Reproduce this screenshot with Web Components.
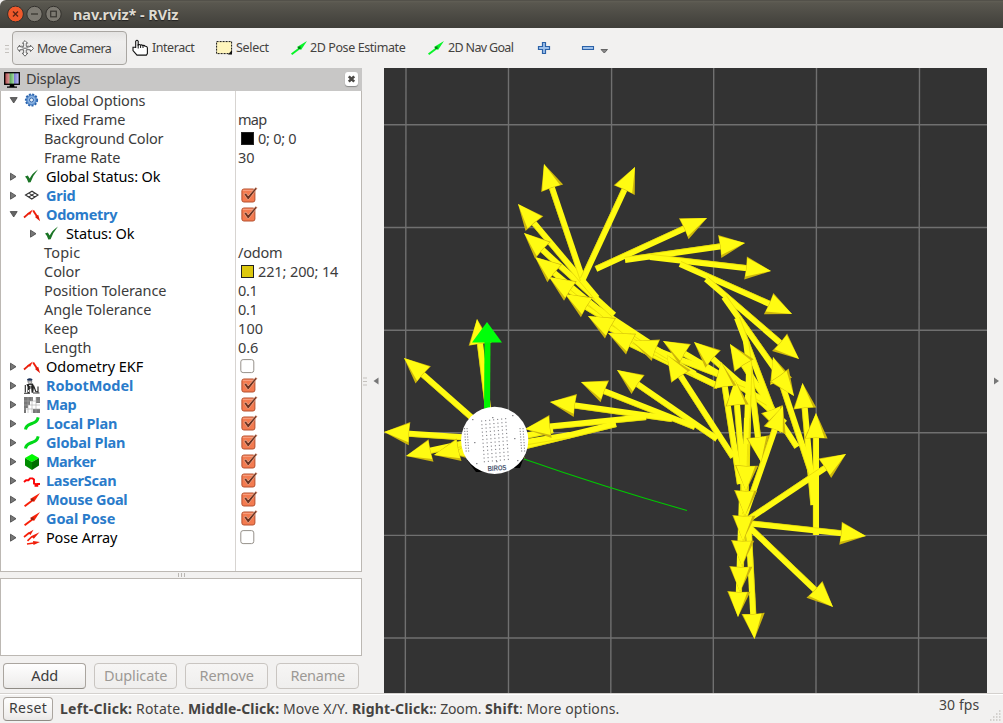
<!DOCTYPE html>
<html lang="en"><head><meta charset="utf-8"><title>nav.rviz* - RViz</title>
<style>
html,body{margin:0;height:100%;overflow:hidden;background:#f2f1f0}
body{font-family:"Noto Sans","Open Sans",sans-serif;font-size:14.5px;color:#3c3c3c}
</style></head><body>
<rviz-window></rviz-window>
<script>
const define=(name,html,setup)=>customElements.define(name,class extends HTMLElement{
  connectedCallback(){
    if(this.shadowRoot)return;
    const r=this.attachShadow({mode:'open'});
    r.innerHTML=typeof html==='function'?html(this):html;
    if(setup)setup(this,r);
  }
});

/* A single line of text tracked to a given width. */
define('fit-text','<style>:host{display:block;flex:none;white-space:nowrap;line-height:19px;width:var(--w)}span{display:inline-block}</style><span><slot></slot></span>',(el,r)=>{
  const w=+el.getAttribute('w');
  if(!w)return;
  el.style.setProperty('--w',w+'px');
  const s=r.querySelector('span'),n=el.textContent.length;
  s.style.letterSpacing=((w+.3-s.getBoundingClientRect().width)/n).toFixed(3)+'px';
});

const svg=(w,h,body,vb)=>`<svg width="${w}" height="${h}" viewBox="${vb||`0 0 ${w} ${h}`}">${body}</svg>`;
const arrowIcon=(c,d)=>svg(16,16,`<path d="M0 13.4 8 7.4 9.2 9 1.2 15z" fill="${c}"/><path d="M6 7 16 1 10 10z" fill="${c}"/><path d="m6.6 7 2.8-.8.4 2.6-2.2.4z" fill="${d}"/>`);
const odom='<path d="M0 10.5 4.8 6.4" stroke="#e8200c" stroke-width="1.8"/><path d="M3 6.4 8.8 2.6 6.2 7.8z" fill="#f01c08"/><path d="M9.2 3.4 13 9.5" stroke="#f01c08" stroke-width="1.9"/><path d="M11 9.9 14.2 7.8l1.9 6.4z" fill="#e01808"/>';
const plan=svg(16,16,'<path d="M1.5 13.5C2 9 5 8.7 8 7.5S13 6 14.2 1.3" fill="none" stroke="#00d818" stroke-width="3"/>');
const icons={
  gear:svg(16,16,'<circle cx="7.5" cy="7" r="5.6" fill="#6d9fd8" stroke="#2c64ad" stroke-width="2" stroke-dasharray="2 1.3"/><circle cx="7.5" cy="7" r="4.5" fill="#8db5e4" stroke="#4d82c4"/><circle cx="7.5" cy="7" r="2" fill="#e9f1fa" stroke="#3569ad"/>'),
  ok:svg(16,16,'<path d="M1 7.6 3.8 6.6 5.7 9.6Q8.4 4.2 14 .6 9 6.5 6.6 13.2L4.3 13.4Q3.4 10 1 7.6z" fill="#1b7526"/>'),
  grid:svg(16,16,'<path d="M1.5 7 8 3.2l6 3.8-6.2 4z M4.8 5.1l6.2 4M11 5.1l-6.4 4" fill="none" stroke="#333" stroke-width="1.1"/>'),
  odom:svg(16,16,odom),
  robot:svg(16,16,'<path d="M3 1.2Q5.8-.5 8.5 1.2L8 2.7H3.5z" fill="#1c3158"/><path d="M3.8 3h4l-.4 2.5H4.5z" fill="#ccc" stroke="#666" stroke-width=".6"/><path d="M2.4 6.2 9 5.5 10 9 9.2 14.8H7.6L7.2 10 5.6 11 5.6 15H3.4L3.6 9z" fill="#222"/><path d="M1.3 7v7.5M9.5 7.5l2.3 6 2.2.5V8.5" fill="none" stroke="#222" stroke-width="1.1"/><path d="M0 15.3h6M9 15h6.5" stroke="#333"/><path d="M5 7.4h2.5M5.8 9h1.5M4.5 12v2" stroke="#eee"/>'),
  map:svg(16,16,'<rect width="16" height="16" fill="#fff"/><path d="M0 0h9v4H6v4H4v3H0zM12 0h4v6h-4zM0 11h2v5H0zM9 12h7v4H9z" fill="#777"/><path d="M0 4h16M0 8h16M0 12h16M4 0v16M8 0v16M12 0v16" stroke="#aaa" stroke-width=".6"/>'),
  plan,
  marker:svg(16,16,'<path d="M8 0 15 4 8 8 1 4z" fill="#00fa00"/><path d="M1 4 8 8v8L1 11.5z" fill="#008c00"/><path d="M15 4 8 8v8l7-4.5z" fill="#006f00"/>'),
  laser:svg(16,16,'<path d="M0 9 2 7.2H4.5L6 5.4H8.5L10 6.4V10.5l1.5.6v1.6H13.3V11H16" fill="none" stroke="#fb0505" stroke-width="1.9"/>'),
  goal:arrowIcon('#f82008','#8e2414'),
  array:svg(16,16,'<path d="M0 7 5 3M3.5 10.8 8 6.5M3 14 10 13" stroke="#f82008" stroke-width="1.7"/><path d="M3.7 3 9.5-.3 6.5 4.9zM7 6.2 15.5 2.2 9.8 8.8zM9 10.9 16 12.1 9.5 15z" fill="#ee1d0a"/>')
};
const check=svg(18,17,'<rect x=".9" y="2" width="13" height="13" rx="2" fill="#f37b50" stroke="#b5502e"/><path d="M1.8 3.3h11" stroke="#f9a787"/><path d="M3 7.3 5 6 7.2 9 14.6.6 16.2 1.4 7.7 12.5H6.7z" fill="#6b3322" stroke="#ffc2a7" stroke-width=".6"/>');
const box=svg(18,17,'<rect x=".8" y="1.6" width="13" height="13" rx="2.3" fill="#fff" stroke="#96918a"/>');

define('tree-row',el=>{
  const a=n=>el.getAttribute(n);
  const tone=a('tone'),v=a('value')||'';
  return `<style>
  :host{display:grid;grid-template-columns:234px 1fr;height:19px;align-items:center;color:${tone==='on'?'#2a7bca':tone==='black'?'#000':'#3c3c3c'};font-weight:${tone==='on'?700:400}}
  .n,.v{display:flex;align-items:center;height:19px;min-width:0}
  .n{padding-left:${a('level')==='1'?27:7}px;box-sizing:border-box}
  .t{width:10px;height:12px;flex:none}.i{width:16px;height:16px;margin:0 6px;flex:none}
  .plain{padding-left:43px}.v{padding-left:3px;color:#3c3c3c;font-weight:400}.sw{width:11px;height:11px;border:1px solid #222;margin:0 4px 0 3px}
  .c{margin-left:3px}svg{display:block;overflow:visible}
  </style><div class="n ${a('icon')?'':'plain'}">${a('icon')?`<div class="t">${svg(10,12,a('open')!==null?'<path d="M2.2 2.6h7L5.7 8z" fill="#666" stroke="#444" stroke-width=".8"/>':'<path d="M2.5 2.2v7L8 5.7z" fill="#777" stroke="#444" stroke-width=".8"/>')}</div><div class="i">${icons[a('icon')]}</div>`:''}<fit-text w="${a('w')}">${a('label')}</fit-text></div>
  <div class="v">${v==='on'?`<span class="c">${check}</span>`:v==='off'?`<span class="c" style="margin-left:2px">${box}</span>`:`${a('swatch')?`<span class="sw" style="background:${a('swatch')}"></span>`:''}${v?`<fit-text w="${a('vw')}">${v}</fit-text>`:''}`}</div>`;
});

/* label, width, icon, tone, value, value width, swatch, flags */
const rows=[
 ['Global Options',99,'gear','','','','','open'],
 ['Fixed Frame',81,'','','map',28],
 ['Background Color',119,'','','0; 0; 0',38,'#000'],
 ['Frame Rate',76,'','','30',16],
 ['Global Status: Ok',114,'ok','black'],
 ['Grid',29,'grid','on','on'],
 ['Odometry',71,'odom','on','on','','','open'],
 ['Status: Ok',68,'ok','black','','','','nest'],
 ['Topic',36,'','','/odom',44],
 ['Color',36,'','','221; 200; 14',80,'#ddc80e'],
 ['Position Tolerance',122,'','','0.1',19],
 ['Angle Tolerance',107,'','','0.1',19],
 ['Keep',34,'','','100',25],
 ['Length',47,'','','0.6',20],
 ['Odometry EKF',97,'odom','black','off'],
 ['RobotModel',87,'robot','on','on'],
 ['Map',30,'map','on','on'],
 ['Local Plan',71,'plan','on','on'],
 ['Global Plan',79,'plan','on','on'],
 ['Marker',49,'marker','on','on'],
 ['LaserScan',70,'laser','on','on'],
 ['Mouse Goal',81,'goal','on','on'],
 ['Goal Pose',69,'goal','on','on'],
 ['Pose Array',71,'array','black','off']
];

define('push-button',el=>`<style>
 :host{display:flex;align-items:center;justify-content:center;box-sizing:border-box;border:1px solid #aaa59f;border-bottom-color:#8f8b85;border-radius:4px;background:linear-gradient(#fefefe,#f0efee 80%,#e9e8e7);color:#3c3c3c}
 :host([disabled]){border-color:#c9c5c1;background:linear-gradient(#f6f5f4,#efeeed);color:#9c9995}
 fit-text{margin-top:-2px}
 </style><fit-text w="${el.getAttribute('w')}">${el.getAttribute('label')}</fit-text>`);

define('title-bar',`<style>
 :host{display:flex;align-items:center;height:28px;background:linear-gradient(#45433e 0,#615f56 1px,#59574f 3px,#3f3e39);color:#dfdbd2;font-weight:700;font-size:14.5px;padding-left:7px;box-sizing:border-box;border-radius:6px 0 0 0}
 svg{display:block;margin-right:11px}fit-text{text-shadow:0 1px 1px #222}
 </style>${svg(55,18,'<circle cx="8.5" cy="9" r="7.9" fill="#f0592b" stroke="#33312d"/><path d="m6 6.5 5 5m0-5-5 5" stroke="#5b2414" stroke-width="1.4"/><circle cx="27.5" cy="9" r="7.7" fill="#7d7a72" stroke="#33312d"/><path d="M24 9h7" stroke="#383631" stroke-width="1.3"/><circle cx="46.5" cy="9" r="7.7" fill="#7d7a72" stroke="#33312d"/><rect x="43.7" y="6.2" width="5.6" height="5.6" fill="none" stroke="#383631" stroke-width="1.2"/>')}<fit-text w="105">nav.rviz* - RViz</fit-text>`);

define('tool-item',el=>`<style>:host{display:flex;align-items:center;height:34px;box-sizing:border-box}
 ::slotted(svg){display:block;flex:none}
 :host([active]){border:1px solid #a9a6a2;border-radius:4px;background:linear-gradient(#e4e3e2,#efeeed 30%,#e8e7e6)}</style><slot></slot>`);
define('tool-bar',`<style>
 :host{display:flex;height:40px;padding:3px 0 3px 5px;box-sizing:border-box;background:#f2f1f0;font-size:12.5px;color:#454341;align-items:flex-start}
 tool-item{height:33px}tool-item[active]{height:34px;width:115px;margin:0 5px 0 1px;padding:1px 0 0 4px}
 svg{display:block}.menu{margin:2px 0 0 4px}
 </style>
 ${svg(6,34,'<path d="M0 14.5h4M0 18h4M0 21.5h4" stroke="#c4c1bd"/>')}
 <tool-item active>${svg(17,17,'<path d="M8 .6 10.6 3.2H9.2v3.2q3-.4 4.3.2V5.2l3 3.2-3 3.2v-1.5q-1.5-.7-4.3-.3v3.4h1.6L8 16.2 5.2 13.2h1.5V9.8q-2.7-.3-4.1.3v1.5L.2 8.4 2.6 5.2v1.4q1.5-.6 4.1-.2V3.2H5.4z" fill="#fff" stroke="#555" stroke-width=".9"/><path d="M2.5 6.5 13.5 10M13.5 6.5 2.5 10" stroke="#777" stroke-width=".8"/>')}<fit-text style="margin-left:3px" w="74">Move Camera</fit-text></tool-item>
 <tool-item>${svg(17,17,'<path d="M3.7 9V2.2Q5 .3 6.2 2.2V6q1.2-1 2.3.1 1.3-.7 2.3.5 1.5-.6 2.3.7 2-.2 2.3 1.5v5.8l-1 1.5H5L1 11.5V8.3h2.7z" fill="#fff" stroke="#111" stroke-width="1.1"/><path d="M6.2 5v4.5M8.6 6.2V9M11 7v2" stroke="#111"/>')}<fit-text style="margin-left:3px" w="42">Interact</fit-text></tool-item>
 <tool-item style="margin-left:22px">${svg(17,14,'<rect x=".6" y=".6" width="15" height="12" fill="#fff5bd" stroke="#111" stroke-dasharray="2 1"/><path d="M16 9v4.5h-4z" fill="#111"/>')}<fit-text style="margin-left:3px" w="32.5">Select</fit-text></tool-item>
 <tool-item style="margin-left:22.5px">${arrowIcon('#08f428','#067a18')}<fit-text style="margin-left:3px" w="95">2D Pose Estimate</fit-text></tool-item>
 <tool-item style="margin-left:23px">${arrowIcon('#08f428','#067a18')}<fit-text style="margin-left:4px" w="65">2D Nav Goal</fit-text></tool-item>
 <tool-item style="margin-left:24px">${svg(14,14,'<path d="M5.5 1.5h3v4h4v3h-4v4h-3v-4h-4v-3h4z" fill="#9dc0ea" stroke="#2c62a8" stroke-width="1.2"/>')}</tool-item>
 <tool-item style="margin-left:30px">${svg(14,14,'<path d="M1.5 5.5h11v3h-11z" fill="#9dc0ea" stroke="#2c62a8" stroke-width="1.1"/>')}<svg class="menu" width="10" height="14" viewBox="0 0 10 14"><path d="M2 7.5h6.5L5.3 11z" fill="#888" stroke="#666"/></svg></tool-item>`);

define('displays-panel',()=>`<style>
 :host{display:flex;flex-direction:column;width:362px;height:625px;background:#f2f1f0}
 header{height:23px;background:#c8c7c6;display:flex;align-items:center;padding:0 4px;box-sizing:border-box;font-size:14.5px}
 header fit-text{margin:-2px 0 0 6px;flex:1}
 .close{width:13px;height:14px;background:#fff;border-radius:3px;box-shadow:0 1px 1px #888;margin-top:-1px}
 .tree{height:481px;box-sizing:border-box;border:1px solid #bcb8b3;border-top:0;background:linear-gradient(90deg,transparent 234px,#d7d4d1 234px 235px,transparent 235px) #fff}
 .grip{height:6px;display:flex;justify-content:center}
 .help{height:78px;box-sizing:border-box;border:1px solid #bcb8b3;background:#fff}
 .buttons{display:grid;grid-template-columns:repeat(4,83px);gap:8px;padding:7px 3px 0}
 push-button{height:26px}svg{display:block}
 </style><header>${svg(16,18,'<defs><linearGradient id="s"><stop offset="0" stop-color="#b04a4a"/><stop offset=".32" stop-color="#d99a9a"/><stop offset=".34" stop-color="#56a456"/><stop offset=".65" stop-color="#a9dda9"/><stop offset=".67" stop-color="#7c7cd0"/><stop offset="1" stop-color="#c8c8fa"/></linearGradient></defs><rect x=".7" y="1.7" width="14.6" height="11.6" fill="url(#s)" stroke="#000" stroke-width="1.3"/><path d="M6 13.5h4l.5 2H13v1.3H3v-1.3h2.5z"/>')}<fit-text w="54">Displays</fit-text><span class="close">${svg(13,14,'<path d="m3.8 4.3 5.4 5.4m0-5.4-5.4 5.4" stroke="#4c4a47" stroke-width="2.6"/>')}</span></header>
 <div class="tree">${rows.map(r=>`<tree-row label="${r[0]}" w="${r[1]}" icon="${r[2]||''}" tone="${r[3]||''}" value="${r[4]||''}" vw="${r[5]||''}" swatch="${r[6]||''}" ${r[7]==='open'?'open':r[7]==='nest'?'level="1"':''}></tree-row>`).join('')}</div>
 <div class="grip">${svg(9,6,'<path d="M1.5 1v4M4.5 1v4M7.5 1v4" stroke="#bab7b3"/>')}</div>
 <div class="help"></div>
 <div class="buttons"><push-button label="Add" w="26.5"></push-button><push-button disabled label="Duplicate" w="63"></push-button><push-button disabled label="Remove" w="54"></push-button><push-button disabled label="Rename" w="54"></push-button></div>`);

/* Odometry arrows, as tip x, tip y, tail x, tail y in window coordinates. */
const poses=[
 [816,413,816,535],[802.5,383,813.5,505],[773,357,812,475],[730,344,797,447],[694,342,785,423],[663,341,768,403],[632,341,746,385],[608,333,718,386],[588,316,695,374],[565,294,669,357],[549,277,651,344],[535,257,629,335],[524,233,614,315],[518,204,597,298],[544,164,583,280],[635,167,583,279],
 [707,218,596,269],[745,243,625,260],[771,271,650,257],[792,314,680,264],[799,359,706,279],[794,396,724,297],[781,433,737,318],[761,462,746,341],[746,491,749,369],[745,516,748,395],[743,541,747,418],[742,566,745,444],[740,592,744,470],[738,617,742,495],[754.5,639,748,517],[833,607,746,524],[866,536,746,523],[846,454,746,521],[783,406,745,515],[735,380,745,500],[721,362,740,484],
 [667,355,733,457],[617,370,717,439],[581,382,695,427],[550,402,672,419],[525,429,646,417],[497,453,616,424],[452,454,570,435],[434,455,553,430],[406,456,525,430],[384,432,505,440],[404,358,496,439],[477,319,492,440]
];
const place=([x,y,u,v],draw)=>{
  const L=Math.hypot(u-x,v-y),a=Math.atan2(v-y,u-x)*180/Math.PI;
  return `<g transform="translate(${x} ${y}) rotate(${a.toFixed(2)})">${draw(L.toFixed(1),a)}</g>`;
};
const shaft=p=>place(p,L=>`<path d="M22-3H${L}V3H22z" fill="#fffb12"/><path d="M22 2.7H${L}" stroke="#e5d808" stroke-width=".7"/>`);
/* the lit face of the cone leans to the upper right */
const head=p=>place(p,(L,a)=>{
  const up=Math.cos((a+40)*Math.PI/180)>0?1:-1;
  return `<path d="M0 0 25.6-11.6 25 0 25.6 11.6z" fill="#cdb70c"/><path d="M0 0 25 ${-9.4-up*.9} 24.6 0 25 ${9.4-up*.9}z" fill="#fffb12"/>`;
});
let dots='';
for(let j=0;j<12;j++)for(let i=0;i<7;i++)dots+=`<rect x="${(481+i*4+j*.25).toFixed(1)}" y="${(420.5+j*3.7-i*.4).toFixed(1)}" width="1.2" height="1.1"/>`;
for(let j=0;j<9;j++)for(const x of[464,466.5,519.5,522.5])dots+=`<rect x="${x+j*.2}" y="${428+j*2.8}" width="1.1" height="1.2"/>`;
for(const[x,y]of[[492,417],[512,415],[472,419],[474,442],[514,438],[476,463],[517,460],[496,461]])dots+=`<rect x="${x}" y="${y}" width="1.5" height="1.2"/>`;
define('scene-view',`<style>:host{display:block;width:603px;height:625px;background:#333}svg{display:block}</style>
<svg width="603" height="625" viewBox="384 68 603 625">
<g stroke-width="1.4" stroke="#707070"><path d="M406 68 405.3 693M508.5 68V693M611.6 68 610.8 693M713.7 68 713.3 693M816.5 68 816 693M919.5 68 918.5 693M384 124.8H987M384 227.5H987M384 330.3H987M384 432.8H987M384 535.4H987M384 638H987"/></g>
<path d="M524 459Q604 487 687 510.5" fill="none" stroke="#00c800" stroke-width="1.1"/>
${poses.map(shaft).join('')}${poses.map(head).join('')}
<path d="M484.5 342h6L490 412h-6z" fill="#00f400"/><path d="M487 322 502 342.5H472z" fill="#00ff0a"/>
<path d="m467 460 9 12h10v-12zM524 457l-4 11h-12l2-8z" fill="#000"/>
<circle cx="494.7" cy="440.3" r="33.6" fill="#fff"/><g fill="#8b8b90">${dots}</g>
<text x="487.5" y="470.7" transform="rotate(-3 496 468)" textLength="19" lengthAdjust="spacingAndGlyphs" font-family="Liberation Sans,sans-serif" font-weight="700" font-size="7.5" fill="#4a5670">BIROS</text>
</svg>`);

define('status-bar',`<style>
 :host{display:flex;align-items:center;height:30px;box-sizing:border-box;padding:0 1px 0 3px;border-top:1px solid #d4d1ce;box-shadow:inset 0 1px #fff;background:#f2f1f0;font-size:14px;color:#454341}
 push-button{width:50px;height:24px;margin:0 7px 0 0}.hint{display:flex;flex:1}.fps{margin-top:-8px}.size{margin:14px 0 0 10px}
 fit-text{margin-right:4px}.b{font-weight:700}.j{margin-right:0}.fps{margin-right:0}
 </style><push-button label="Reset" w="38"></push-button><div class="hint">
 <fit-text class="b" w="72">Left-Click:</fit-text><fit-text w="48">Rotate.</fit-text>
 <fit-text class="b" w="91">Middle-Click:</fit-text><fit-text w="65">Move X/Y.</fit-text>
 <fit-text class="b j" w="81">Right-Click:</fit-text><fit-text w="48">: Zoom.</fit-text>
 <fit-text class="b j" w="34">Shift</fit-text><fit-text w="100">: More options.</fit-text></div><fit-text class="fps" w="40">30 fps</fit-text>${'<svg class="size" width="13" height="13" viewBox="0 0 13 13"><path d="M10 2h1.5M7 5h1.5M10 5h1.5M4 8h1.5M7 8h1.5M10 8h1.5M1 11h1.5M4 11h1.5M7 11h1.5M10 11h1.5" stroke="#c9c6c2" stroke-width="1.5"/></svg>'}`);

define('rviz-window',`<style>
 :host{display:flex;flex-direction:column;width:1003px;height:723px;background:#f2f1f0}
 main{display:flex;height:625px}.gap{width:22px;display:flex;align-items:center}.right{width:16px;display:flex;align-items:center}svg{display:block}
 </style><title-bar></title-bar><tool-bar></tool-bar>
 <main><displays-panel></displays-panel><div class="gap">${svg(22,20,'<path d="M1 7h4M1 10.5h4M1 14h4" stroke="#c4c1bd"/><path d="M16.5 6.5v7l-5-3.5z" fill="#777"/>')}</div><scene-view></scene-view><div class="right">${svg(16,20,'<path d="M7 6.5v7l5-3.5z" fill="#777"/>')}</div></main>
 <status-bar></status-bar>`);
</script></body></html>
